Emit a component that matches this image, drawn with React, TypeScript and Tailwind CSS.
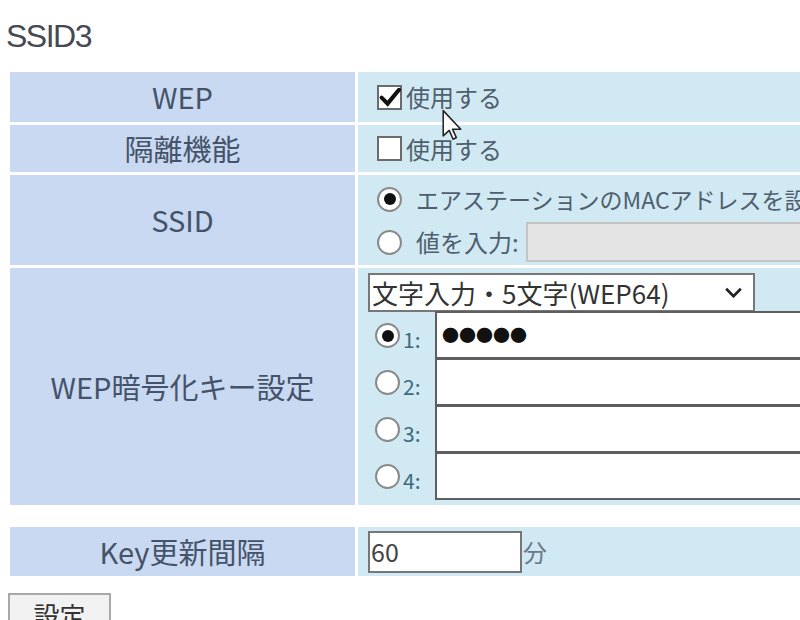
import React from "react";

const jp = { fontFamily: '"Noto Sans CJK JP", "Noto Sans", sans-serif' };

function Check({ checked }: { checked?: boolean }) {
  return (
    <span className="relative inline-block h-[25px] w-[25px] shrink-0 border-2 border-[#6b6b6b] bg-white">
      {checked && (
        <svg viewBox="0 0 20 20" className="absolute -left-[1px] -top-[2px] h-[24px] w-[24px]">
          <path d="M3 10.5 L8 15.5 L17.5 4" fill="none" stroke="#111" strokeWidth="3.4" strokeLinecap="round" />
        </svg>
      )}
    </span>
  );
}

function Radio({ on }: { on?: boolean }) {
  return (
    <span className="flex h-[25px] w-[25px] shrink-0 items-center justify-center rounded-full border-2 border-[#8a8a8a] bg-white">
      {on && <span className="h-[12px] w-[12px] rounded-full bg-[#111]" />}
    </span>
  );
}

function Label({ children }: { children: React.ReactNode }) {
  return (
    <td className="bg-[#c9d9f1] p-0 text-center align-middle text-[29px] text-[#44536a]">
      {children}
    </td>
  );
}

function KeyRow({ n, value }: { n: number; value?: string }) {
  return (
    <div className="flex h-[47px] items-stretch">
      <div className="flex w-[77px] items-center gap-[3px] pl-[17px]">
        <Radio on={n === 1} />
        <span className="mt-[8px] text-[21px] text-[#3d6b80]">{n}:</span>
      </div>
      <div className="-mt-[1px] flex flex-1 items-center border-2 border-[#5e5e5e] bg-white pl-[5px] text-[17px] text-[#111]">
        {value}
      </div>
    </div>
  );
}

export default function App() {
  return (
    <div className="relative h-[620px] w-[800px] overflow-hidden bg-white" style={jp}>
      <div
        className="pl-[6px] pt-[17px] text-[32px] leading-[38px] tracking-[-1.5px] text-[#454a52]"
        style={{ fontFamily: '"Liberation Sans", Arial, sans-serif' }}
      >
        SSID3
      </div>

      <table className="ml-[7px] mt-[14px] w-[1100px] table-fixed border-separate border-spacing-[3px]">
        <colgroup>
          <col className="w-[345px]" />
          <col />
        </colgroup>
        <tbody>
          <tr className="h-[50px]">
            <Label>WEP</Label>
            <td className="bg-[#d0e9f2] p-0 pl-[19px] align-middle">
              <div className="flex items-center gap-[4px] text-[24px] text-[#4f5f6f]">
                <Check checked />
                <span>使用する</span>
              </div>
            </td>
          </tr>
          <tr className="h-[47px]">
            <Label>隔離機能</Label>
            <td className="bg-[#d0e9f2] p-0 pl-[19px] align-middle">
              <div className="flex items-center gap-[4px] text-[24px] text-[#4f5f6f]">
                <Check />
                <span>使用する</span>
              </div>
            </td>
          </tr>
          <tr className="h-[90px]">
            <Label>SSID</Label>
            <td className="bg-[#d0e9f2] p-0 pl-[19px] align-middle">
              <div className="flex flex-col text-[23px] text-[#4f5f6f]">
                <div className="flex h-[44px] items-center gap-[14px]">
                  <Radio on />
                  <span className="whitespace-nowrap">エアステーションのMACアドレスを設定</span>
                </div>
                <div className="flex h-[42px] items-center gap-[14px]">
                  <Radio />
                  <span className="whitespace-nowrap text-[24px]">値を入力:</span>
                  <div className="-ml-[7px] h-[40px] w-[600px] border-2 border-[#c4c4c4] bg-[#e4e4e4]" />
                </div>
              </div>
            </td>
          </tr>
          <tr className="h-[235px]">
            <Label>WEP暗号化キー設定</Label>
            <td className="bg-[#d0e9f2] p-0 pt-[5px] pb-[5px] align-top">
              <div className="ml-[10px] flex h-[39px] w-[387px] items-center justify-between border-2 border-[#777] bg-white pl-[2px] pr-[10px] text-[26px] text-[#333]">
                <span className="whitespace-nowrap leading-none">文字入力・5文字(WEP64)</span>
                <svg viewBox="0 0 20 12" className="h-[11px] w-[19px]">
                  <path d="M2 2 L10 10 L18 2" fill="none" stroke="#222" strokeWidth="3" />
                </svg>
              </div>
              <KeyRow n={1} value="●●●●●" />
              <KeyRow n={2} />
              <KeyRow n={3} />
              <KeyRow n={4} />
            </td>
          </tr>
        </tbody>
      </table>

      <table className="ml-[7px] mt-[16px] w-[1100px] table-fixed border-separate border-spacing-[3px]">
        <colgroup>
          <col className="w-[345px]" />
          <col />
        </colgroup>
        <tbody>
          <tr className="h-[49px]">
            <Label>Key更新間隔</Label>
            <td className="bg-[#d0e9f2] p-0 pl-[10px] align-middle">
              <div className="flex items-center text-[24px] text-[#555]">
                <div className="flex h-[42px] w-[154px] items-center border-2 border-[#777] bg-white pl-[1px] text-[25px] text-[#444]">
                  60
                </div>
                <span className="ml-[1px] text-[#6a7a88]">分</span>
              </div>
            </td>
          </tr>
        </tbody>
      </table>

      <button className="ml-[8px] mt-[14px] h-[44px] w-[103px] border-2 border-[#a8a8a8] bg-[#f2f2f2] pb-[4px] text-[26px] text-[#333]">
        設定
      </button>

      <svg viewBox="0 0 20 30" className="absolute left-[441px] top-[109px] h-[34px] w-[22px]">
        <path d="M2 1 L2 24 L7.5 19 L11 27 L14 25.5 L10.5 18 L18 18 Z" fill="#fff" stroke="#222" strokeWidth="1.4" strokeLinejoin="round" />
      </svg>
    </div>
  );
}
